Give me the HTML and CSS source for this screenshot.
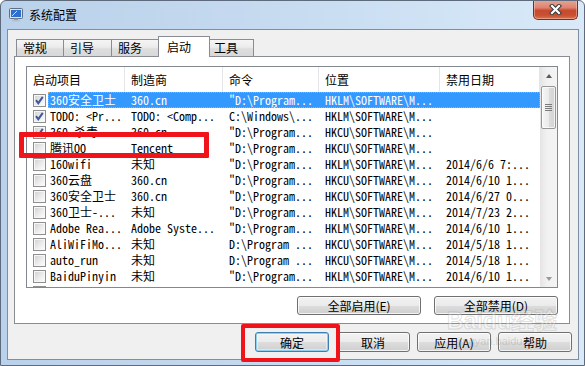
FILE: index.html
```html
<!DOCTYPE html>
<html lang="zh-CN">
<head>
    <meta charset="UTF-8">
    <meta name="viewport" content="width=device-width, initial-scale=1.0">
    <title>系统配置</title>
    <link rel="stylesheet" href="styles.css">
</head>
<body>

<div class="window">
    <div class="titlebar">
        <svg class="app-icon" width="14" height="14" viewBox="0 0 14 14">
            <rect x="0.5" y="0.5" width="13" height="10" rx="1" fill="#dde3ea" stroke="#5f6f83"/>
            <rect x="2" y="2" width="10" height="7" fill="#2c6fd1"/>
            <path d="M3 8 L8 3" stroke="#bfe0ff" stroke-width="1"/>
            <rect x="5" y="10.5" width="4" height="1.5" fill="#8c97a4"/>
            <rect x="3" y="12" width="8" height="1.5" fill="#b7c0ca"/>
        </svg>
        <span class="title">系统配置</span>
        <div class="close-btn">
            <svg width="13" height="11" viewBox="0 0 13 11">
                <path d="M3 2 L10 9 M10 2 L3 9" stroke="#3a3a3a" stroke-width="4.2" stroke-linecap="square"/>
                <path d="M3 2 L10 9 M10 2 L3 9" stroke="#ffffff" stroke-width="2.2" stroke-linecap="square"/>
            </svg>
        </div>
    </div>

    <div class="client">
        <div class="tabs">
            <div class="tab">常规</div>
            <div class="tab">引导</div>
            <div class="tab">服务</div>
            <div class="tab active">启动</div>
            <div class="tab">工具</div>
        </div>

        <div class="panel">
            <div class="list">
                <div class="list-main">
                    <div class="list-head">
                        <div class="hcell">启动项目</div>
                        <div class="hcell">制造商</div>
                        <div class="hcell">命令</div>
                        <div class="hcell">位置</div>
                        <div class="hcell">禁用日期</div>
                    </div>
                    <div class="rows">
                        <div class="row">
                            <span class="chk on"></span>
                            <div class="row-body selected">
                                <span class="cell first">360安全卫士</span>
                                <span class="cell">360.cn</span>
                                <span class="cell">"D:\Program...</span>
                                <span class="cell">HKLM\SOFTWARE\M...</span>
                                <span class="cell"></span>
                            </div>
                        </div>
                        <div class="row">
                            <span class="chk on"></span>
                            <div class="row-body">
                                <span class="cell first">TODO: &lt;Pr...</span>
                                <span class="cell">TODO: &lt;Comp...</span>
                                <span class="cell">C:\Windows\...</span>
                                <span class="cell">HKLM\SOFTWARE\M...</span>
                                <span class="cell"></span>
                            </div>
                        </div>
                        <div class="row">
                            <span class="chk on"></span>
                            <div class="row-body">
                                <span class="cell first">360 杀毒</span>
                                <span class="cell">360.cn</span>
                                <span class="cell">"D:\Program...</span>
                                <span class="cell">HKCU\SOFTWARE\M...</span>
                                <span class="cell"></span>
                            </div>
                        </div>
                        <div class="row">
                            <span class="chk"></span>
                            <div class="row-body">
                                <span class="cell first">腾讯QQ</span>
                                <span class="cell">Tencent</span>
                                <span class="cell">"D:\Program...</span>
                                <span class="cell">HKCU\SOFTWARE\M...</span>
                                <span class="cell"></span>
                            </div>
                        </div>
                        <div class="row">
                            <span class="chk"></span>
                            <div class="row-body">
                                <span class="cell first">160wifi</span>
                                <span class="cell">未知</span>
                                <span class="cell">"D:\Program...</span>
                                <span class="cell">HKLM\SOFTWARE\M...</span>
                                <span class="cell">2014/6/6 7:...</span>
                            </div>
                        </div>
                        <div class="row">
                            <span class="chk"></span>
                            <div class="row-body">
                                <span class="cell first">360云盘</span>
                                <span class="cell">360.cn</span>
                                <span class="cell">"D:\Program...</span>
                                <span class="cell">HKCU\SOFTWARE\M...</span>
                                <span class="cell">2014/6/10 1...</span>
                            </div>
                        </div>
                        <div class="row">
                            <span class="chk"></span>
                            <div class="row-body">
                                <span class="cell first">360安全卫士</span>
                                <span class="cell">360.cn</span>
                                <span class="cell">"D:\Program...</span>
                                <span class="cell">HKCU\SOFTWARE\M...</span>
                                <span class="cell">2014/6/27 0...</span>
                            </div>
                        </div>
                        <div class="row">
                            <span class="chk"></span>
                            <div class="row-body">
                                <span class="cell first">360卫士-...</span>
                                <span class="cell">未知</span>
                                <span class="cell">"D:\Program...</span>
                                <span class="cell">HKLM\SOFTWARE\M...</span>
                                <span class="cell">2014/7/23 2...</span>
                            </div>
                        </div>
                        <div class="row">
                            <span class="chk"></span>
                            <div class="row-body">
                                <span class="cell first">Adobe Rea...</span>
                                <span class="cell">Adobe Syste...</span>
                                <span class="cell">"D:\Program...</span>
                                <span class="cell">HKLM\SOFTWARE\M...</span>
                                <span class="cell">2014/6/10 1...</span>
                            </div>
                        </div>
                        <div class="row">
                            <span class="chk"></span>
                            <div class="row-body">
                                <span class="cell first">AliWiFiMo...</span>
                                <span class="cell">未知</span>
                                <span class="cell">D:\Program ...</span>
                                <span class="cell">HKCU\SOFTWARE\M...</span>
                                <span class="cell">2014/5/18 1...</span>
                            </div>
                        </div>
                        <div class="row">
                            <span class="chk"></span>
                            <div class="row-body">
                                <span class="cell first">auto_run</span>
                                <span class="cell">未知</span>
                                <span class="cell">D:\Program ...</span>
                                <span class="cell">HKCU\SOFTWARE\M...</span>
                                <span class="cell">2014/5/18 1...</span>
                            </div>
                        </div>
                        <div class="row">
                            <span class="chk"></span>
                            <div class="row-body">
                                <span class="cell first">BaiduPinyin</span>
                                <span class="cell">未知</span>
                                <span class="cell">"D:\Program...</span>
                                <span class="cell">HKLM\SOFTWARE\M...</span>
                                <span class="cell">2014/6/10 1...</span>
                            </div>
                        </div>
                        <div class="row">
                            <span class="chk"></span>
                        </div>
                    </div>
                </div>
                <div class="vscroll">
                    <div class="sb-arrow"><span class="tri-up"></span></div>
                    <div class="sb-thumb"><span class="grip"></span></div>
                    <div class="sb-space"></div>
                    <div class="sb-arrow"><span class="tri-down"></span></div>
                </div>
            </div>

            <div class="panel-btns">
                <button class="btn btn-wide">全部启用(E)</button>
                <button class="btn btn-wide">全部禁用(D)</button>
            </div>
        </div>

        <div class="dlg-btns">
            <button class="btn btn-dlg btn-default">确定</button>
            <button class="btn btn-dlg">取消</button>
            <button class="btn btn-dlg">应用(A)</button>
            <button class="btn btn-dlg">帮助</button>
        </div>
    </div>

    <!-- annotation boxes drawn over the dialog -->
    <div class="mark mark-qq"></div>
    <div class="mark mark-ok"></div>

    <div class="watermark">
        <span class="wm-logo">Baidu经验</span>
        <span class="wm-url">jingyan.baidu.com</span>
    </div>
</div>

</body>
</html>
```

FILE: styles.css
```css
body {
    margin: 0;
    background: #ffffff;
    font-family: "Noto Sans CJK SC", "Liberation Sans", sans-serif;
    font-size: 12px;
    color: #000;
}

.window {
    position: relative;
    width: 585px;
    height: 366px;
    box-sizing: border-box;
    border: 1px solid #5d6b7c;
    border-radius: 6px 6px 0 0;
    background: linear-gradient(to right, #b9d1ea 0%, #c4d9ef 40%, #d0e3f5 75%, #d9e9f8 100%);
    overflow: hidden;
}

/* title bar */

.titlebar {
    height: 28px;
    display: flex;
    align-items: center;
    padding-left: 8px;
}

.app-icon {
    display: block;
}

.title {
    margin-left: 6px;
    line-height: 14px;
    color: #000;
}

.close-btn {
    margin-left: auto;
    margin-right: 6px;
    margin-top: -1px;
    align-self: flex-start;
    width: 45px;
    height: 20px;
    box-sizing: border-box;
    border: 1px solid #6e3128;
    border-top: none;
    border-radius: 0 0 5px 5px;
    background: linear-gradient(#e7a597 0%, #dd8470 40%, #c84a2f 55%, #c9502f 80%, #d9744f 100%);
    box-shadow: inset 0 0 0 1px rgba(255, 210, 200, 0.45);
    display: flex;
    align-items: center;
    justify-content: center;
}

/* client area */

.client {
    margin: 0 5px 5px 6px;
    height: 331px;
    box-sizing: border-box;
    border: 1px solid #7f8fa3;
    background: #f0f0f0;
    padding: 6px 6px 0 6px;
}

.tabs {
    display: flex;
    align-items: flex-end;
    height: 21px;
    padding-left: 2px;
    margin-bottom: -1px;
    position: relative;
    z-index: 1;
}

.tab {
    height: 17px;
    margin-bottom: 1px;
    margin-right: -1px;
    box-sizing: border-box;
    border: 1px solid #898c95;
    border-bottom: none;
    background: linear-gradient(#f5f5f5 0%, #ececec 45%, #dedede 55%, #d8d8d8 100%);
    padding-left: 6px;
    line-height: 16px;
    white-space: nowrap;
}

.tab:nth-child(1) { width: 48px; }
.tab:nth-child(2) { width: 49px; }
.tab:nth-child(3) { width: 48px; }
.tab:nth-child(5) { width: 45px; padding-left: 4px; }

.tab.active {
    width: 52px;
    height: 21px;
    margin-bottom: 0;
    padding-left: 8px;
    line-height: 19px;
    background: #ffffff;
    position: relative;
    z-index: 2;
}

.panel {
    width: 556px;
    height: 268px;
    box-sizing: border-box;
    border: 1px solid #898c95;
    background: #ffffff;
    padding: 9px 11px 8px;
}

/* list view */

.list {
    width: 532px;
    height: 222px;
    box-sizing: border-box;
    border: 1px solid #828790;
    display: flex;
    background: #ffffff;
}

.list-main {
    width: 513px;
    overflow: hidden;
}

.list-head {
    display: grid;
    grid-template-columns: 98px 98px 96px 121px 100px;
    height: 25px;
}

.hcell {
    box-sizing: border-box;
    border-right: 1px solid #e3e5e8;
    padding-left: 6px;
    line-height: 25px;
    white-space: nowrap;
    overflow: hidden;
}

.rows {
    height: 195px;
    overflow: hidden;
    font-family: "Noto Sans Mono CJK SC", "Noto Sans CJK SC", "DejaVu Sans Mono", monospace;
}

.row {
    display: flex;
    align-items: center;
    height: 16px;
    flex: none;
}

.chk {
    flex: none;
    width: 13px;
    height: 13px;
    margin: 0 2px 0 6px;
    box-sizing: border-box;
    border: 1px solid #8f8f8f;
    background: linear-gradient(135deg, #cfd0d3 0%, #ececec 55%, #ffffff 100%);
    box-shadow: inset 0 0 0 1px #f7f7f7;
}

.chk.on {
    background-image:
        url("data:image/svg+xml,%3Csvg xmlns='http://www.w3.org/2000/svg' width='11' height='11' viewBox='0 0 11 11'%3E%3Cpath d='M2 5.2 L4.3 8.2 L8.8 1.8' fill='none' stroke='%2340599a' stroke-width='2'/%3E%3C/svg%3E"),
        linear-gradient(135deg, #cfd0d3 0%, #ececec 55%, #ffffff 100%);
    background-repeat: no-repeat;
    background-position: center;
}

.row-body {
    display: grid;
    grid-template-columns: 77px 98px 96px 121px 100px;
    height: 16px;
    box-sizing: border-box;
}

.row-body.selected {
    background: #3399ff;
    color: #ffffff;
    outline: 1px dotted #e3a14b;
    outline-offset: -1px;
}

.cell {
    padding-left: 6px;
    line-height: 16px;
    white-space: nowrap;
    overflow: hidden;
}

.cell.first {
    padding-left: 2px;
}

/* scrollbar */

.vscroll {
    width: 17px;
    display: flex;
    flex-direction: column;
    align-items: center;
    background: linear-gradient(to right, #e4e4e4, #f1f1f1 40%, #f4f4f4);
}

.sb-arrow {
    width: 17px;
    height: 17px;
    display: flex;
    align-items: center;
    justify-content: center;
}

.tri-up {
    border-left: 3.5px solid transparent;
    border-right: 3.5px solid transparent;
    border-bottom: 4px solid #5a5a5a;
}

.tri-down {
    border-left: 3.5px solid transparent;
    border-right: 3.5px solid transparent;
    border-top: 4px solid #9a9a9a;
}

.sb-thumb {
    width: 15px;
    height: 43px;
    margin-top: 2px;
    box-sizing: border-box;
    border: 1px solid #979797;
    border-radius: 2px;
    background: linear-gradient(to right, #f6f6f6 0%, #ebebeb 50%, #dcdcdc 51%, #d4d4d4 100%);
    box-shadow: inset 0 0 0 1px rgba(255, 255, 255, 0.7);
    display: flex;
    align-items: center;
    justify-content: center;
}

.grip {
    width: 7px;
    height: 1px;
    background: #7a7a7a;
    box-shadow: 0 2px 0 #7a7a7a, 0 -2px 0 #7a7a7a, 0 4px 0 #7a7a7a;
    margin-bottom: 2px;
}

.sb-space {
    flex: 1;
}

/* buttons */

.btn {
    height: 19px;
    box-sizing: border-box;
    border: 1px solid #707070;
    border-radius: 3px;
    background: linear-gradient(#f2f2f2 0%, #ebebeb 50%, #dddddd 51%, #cfcfcf 100%);
    box-shadow: inset 0 0 0 1px rgba(255, 255, 255, 0.75);
    font-family: "Noto Sans CJK SC", "Liberation Sans", sans-serif;
    font-size: 12px;
    line-height: 16px;
    padding: 0;
    color: #000;
}

.panel-btns {
    display: flex;
    justify-content: flex-end;
    gap: 13px;
    margin-top: 8px;
}

.btn-wide {
    width: 124px;
}

.dlg-btns {
    display: flex;
    justify-content: flex-end;
    gap: 7px;
    margin-top: 8px;
}

.btn-dlg {
    width: 74px;
    height: 20px;
    line-height: 17px;
}

.btn-default {
    border-color: #3c7fb1;
    box-shadow: inset 0 0 0 1px #8fd0f2, inset 0 0 0 2px rgba(255, 255, 255, 0.4);
}

/* red annotation boxes */

.mark {
    position: absolute;
    box-sizing: border-box;
    border: 5px solid #f0141a;
    border-radius: 1px;
}

.mark-qq {
    left: 18px;
    top: 131px;
    width: 190px;
    height: 26px;
}

.mark-ok {
    left: 240px;
    top: 323px;
    width: 99px;
    height: 38px;
    border-width: 4px;
    border-radius: 2px;
}

/* watermark */

.watermark {
    position: absolute;
    left: 446px;
    top: 306px;
    width: 110px;
    display: flex;
    flex-direction: column;
    align-items: center;
    pointer-events: none;
}

.wm-logo {
    font-family: "Liberation Sans", "Noto Sans CJK SC", sans-serif;
    font-size: 23px;
    font-weight: bold;
    line-height: 28px;
    color: rgba(255, 255, 255, 0.3);
    -webkit-text-stroke: 1px rgba(150, 150, 150, 0.3);
}

.wm-url {
    font-family: "Liberation Sans", sans-serif;
    font-size: 11px;
    line-height: 12px;
    color: rgba(140, 140, 140, 0.3);
}
```
